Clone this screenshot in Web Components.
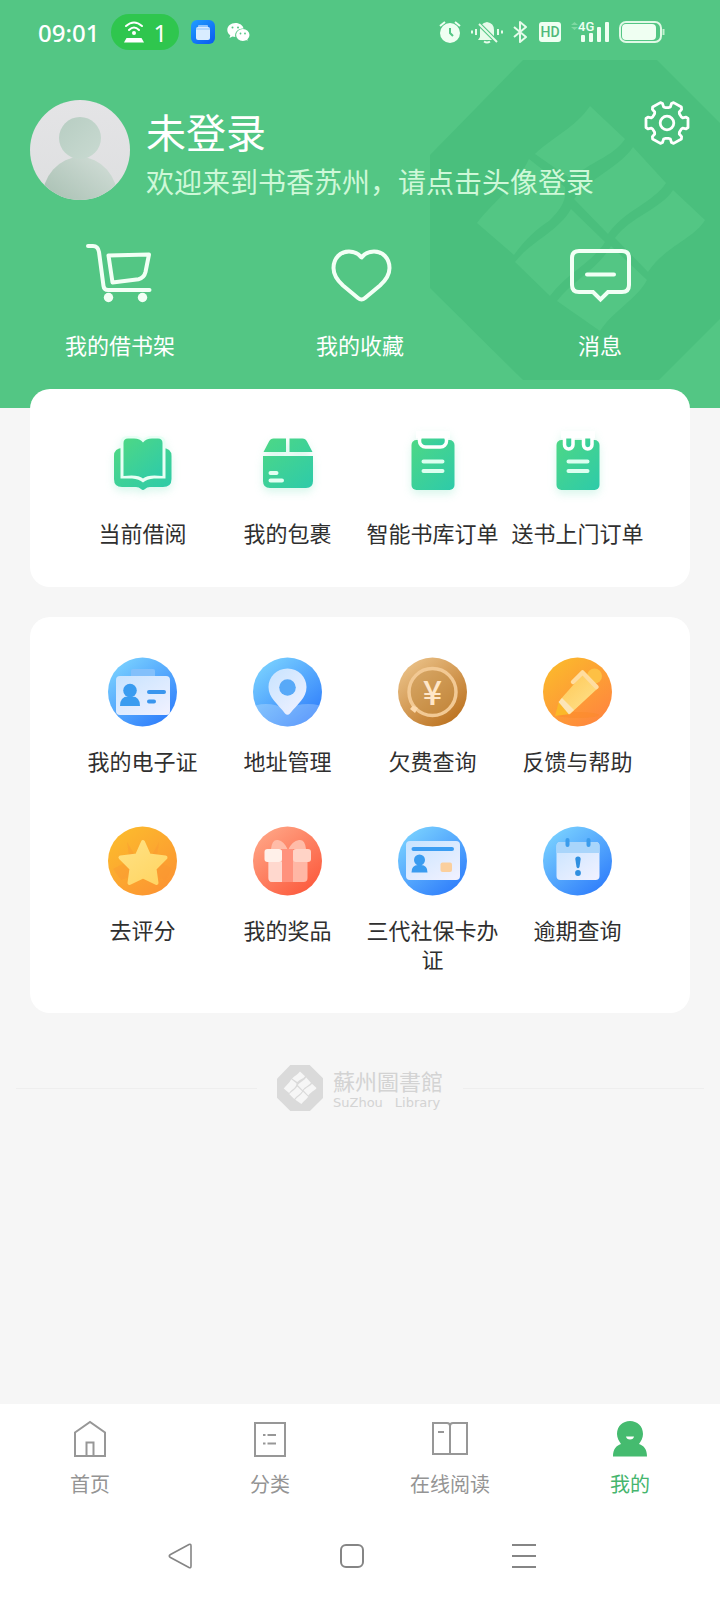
<!DOCTYPE html>
<html lang="zh-CN">
<head>
<meta charset="utf-8">
<meta name="viewport" content="width=device-width, initial-scale=1">
<title>书香苏州</title>
<style>
  body {
    margin: 0;
    background: #f6f6f6;
    color: #2f2f2f;
    font-family: "Noto Sans CJK SC", sans-serif;
    font-size: 22px;
  }
</style>
</head>
<body>
<mine-page></mine-page>

<script>
const gearPath = () => {
  const points = [];
  const add = (r, deg) => {
    const a = deg * Math.PI / 180;
    points.push(`${(23 + r * Math.cos(a)).toFixed(1)} ${(23 + r * Math.sin(a)).toFixed(1)}`);
  };
  for (let deg = 0; deg < 360; deg += 60) {
    add(20, deg - 17);
    add(21.5, deg - 12);
    add(21.5, deg + 12);
    add(20, deg + 17);
    add(16.5, deg + 18);
    add(15.5, deg + 23);
    add(15.5, deg + 37);
    add(16.5, deg + 42);
  }
  return `M${points.join('L')}Z`;
};

const gradient = (id, from, to) => `
  <defs><linearGradient id="${id}" x1="0.1" y1="0" x2="0.9" y2="1">
    <stop offset="0" stop-color="${from}"/><stop offset="1" stop-color="${to}"/>
  </linearGradient></defs>`;

const blueDisc = `${gradient('disc', '#7ed6ff', '#2a78fb')}${gradient('sheet', '#c9e4ff', '#f0f1ff')}
  <circle cx="34.500" cy="35" r="34.500" fill="url(#disc)"/>`;

const green = gradient('green', '#4cd787', '#2fcba8');

// name: [width, height, markup]
const icons = {
  hotspot: [20, 22, `<g fill="none" stroke="#fff" stroke-width="2" stroke-linecap="round"><path d="M2 5Q10-2 18 5M5 9Q10 4 15 9"/></g><circle cx="10" cy="12" r="2" fill="#fff"/><path d="M2.500 17H17.500L20 21.500H0Z" fill="#fff"/>`],
  folder: [24, 24, `${gradient('blue', '#1f9bff', '#0a5cf0')}<rect width="24" height="24" rx="6" fill="url(#blue)"/><rect x="7" y="5" width="10" height="3" rx="1" fill="#8fc6ff"/><rect x="5" y="7" width="14" height="13" rx="2" fill="#d9ecff"/><path d="M5 9H19" stroke="#8cc4ff"/>`],
  wechat: [23, 20, `<path d="M8.500 1C3.800 1 .3 4 .3 8c0 2.200 1.100 4 3 5.200L2.500 16l3-1.500 2.800.5C7.500 10 11 6.300 16.600 6.600 16 3.400 12.600 1 8.500 1Z" fill="#fff"/><ellipse cx="15.800" cy="13" rx="6.700" ry="5.900" fill="#fff"/><path d="M18 17l2.500 2-.5-3Z" fill="#fff"/><g fill="#53c684"><circle cx="5.500" cy="5.500" r="1"/><circle cx="11" cy="5.500" r="1"/><circle cx="13.500" cy="11.500" r=".9"/><circle cx="18" cy="11.500" r=".9"/></g>`],
  alarm: [22, 22, `<circle cx="11" cy="12" r="10" fill="#effff2"/><path d="M11 7V12L14 15" fill="none" stroke="#53c684" stroke-width="2"/><path d="M1 5L6 1M21 5L16 1" stroke="#effff2" stroke-width="2"/>`],
  muted: [32, 22, `<path d="M9 16V9q0-7 7-8 7 1 7 8v7l2 3H7Z" fill="#e6fbea"/><path d="M13 20.500q3 2 6 0" stroke="#e6fbea" stroke-width="2" fill="none"/><path d="M7 2L26 21" stroke="#53c684" stroke-width="4"/><path d="M8 3L26 21" stroke="#e6fbea" stroke-width="2"/><path d="M1 9.500v3M5 8v6M27 8v6M31 9.500v3" stroke="#e6fbea" stroke-width="2"/>`],
  bluetooth: [16, 22, `<path d="M1 6L13 16L7 21V1L13 6L1 16" fill="none" stroke="#e6fbea" stroke-width="2" stroke-linejoin="round"/>`],
  hd: [22, 20, `<rect width="22" height="20" rx="3" fill="#effff2"/><text x="11" y="15" text-anchor="middle" font-family="Roboto, sans-serif" font-size="14" font-weight="500" fill="#4fb97a">HD</text>`],
  signal: [38, 22, `<path d="M0 4L3.500 1L7 4ZM0 6L3.500 9L7 6Z" fill="#7fd8a2"/><text x="7" y="10" font-family="Roboto, sans-serif" font-size="13" font-weight="500" fill="#effff2">4G</text><g fill="#effff2"><rect x="10" y="14" width="4" height="7" rx="1"/><rect x="18" y="12" width="4" height="9" rx="1"/><rect x="26" y="6" width="4" height="15" rx="1"/><rect x="34" y="1" width="4" height="20" rx="1"/></g>`],
  battery: [46, 22, `<rect x="1" y="1" width="41" height="20" rx="6" fill="none" stroke="#e0f9e6" stroke-width="2"/><rect x="3" y="3" width="34" height="16" rx="4" fill="#effff2"/><path d="M44.500 8v6" stroke="#c2f0cf" stroke-width="2"/>`],

  avatar: [100, 100, `
    <defs>
      <clipPath id="round"><circle cx="50" cy="50" r="50"/></clipPath>
      <linearGradient id="back" x2="0" y2="1"><stop stop-color="#e4e4e6"/><stop offset="1" stop-color="#dedfe0"/></linearGradient>
      <linearGradient id="head" x1="0" x2="1" y2="1"><stop stop-color="#b7cdc2"/><stop offset="1" stop-color="#c9dad1"/></linearGradient>
      <linearGradient id="bust" x1=".7" x2=".3" y2=".6"><stop stop-color="#cddad3"/><stop offset="1" stop-color="#abc2b5"/></linearGradient>
    </defs>
    <g clip-path="url(#round)"><rect width="100" height="100" fill="url(#back)"/><ellipse cx="50" cy="100" rx="38" ry="43" fill="url(#bust)"/><circle cx="50" cy="38" r="21" fill="url(#head)"/></g>`],
  gear: [46, 46, `<path d="${gearPath()}" fill="none" stroke="#fff" stroke-width="2.800" stroke-linejoin="round"/><circle cx="23" cy="23" r="6.800" fill="none" stroke="#fff" stroke-width="2.800"/>`],

  cart: [72, 64, `<g transform="translate(4)" fill="none" stroke="#f2fff5" stroke-width="4" stroke-linecap="round" stroke-linejoin="round"><path d="M0 6H5Q10 6 11 12L15.500 46Q16 50 20 50H61.500"/><path d="M20.500 15.500L61 14.500L57.500 32Q56 38 50.500 39.300L24.500 42.500Z"/></g><circle cx="24.500" cy="57.500" r="4.700" fill="#f2fff5"/><circle cx="58.500" cy="57.500" r="4.700" fill="#f2fff5"/>`],
  heart: [72, 64, `<path d="M37.500 17.500C33.500 12 28.500 11.500 25 11.500C16.500 11.500 9.500 18 9.500 28C9.500 35 14 41 19 45.500L34 58Q37.500 61 41 58L56 45.500C61 41 65.500 35 65.500 28C65.500 18 58.500 11.500 50 11.500C46.500 11.500 41.500 12 37.500 17.500Z" fill="none" stroke="#f2fff5" stroke-width="4" stroke-linejoin="round"/>`],
  message: [72, 64, `<path d="M15 11H58Q65 11 65 18V45Q65 52 58 52H44L36.500 59.500L29 52H15Q8 52 8 45V18Q8 11 15 11Z" fill="none" stroke="#f2fff5" stroke-width="4"/><path d="M23 34.500H50" stroke="#f2fff5" stroke-width="4" stroke-linecap="round"/>`],

  book: [70, 70, `${green}<path d="M15 19Q6 19 6 27V50Q6 58 14 58H28Q31 58 33 60Q35 62 37 60Q39 58 42 58H55Q63.500 58 63.500 50V27Q63.500 19 54 19Z" fill="url(#green)"/><path d="M12.500 49.500V13Q12.500 7 20 7H27Q32 7 35 11Q38 7 43 7H50Q57.500 7 57.500 13V49.500H46Q39 50 35 53.500Q31 50 24 49.500Z" fill="#e8fff5"/><path d="M15.500 47V14Q15.500 9.500 20 9.500H26Q32 9.500 35 13.500Q38 9.500 44 9.500H50Q54.500 9.500 54.500 14V47Q40 45 35 49.500Q30 45 15.500 47Z" fill="url(#green)"/>`],
  parcel: [70, 70, `${green}<path d="M10.500 23L16 12.500Q17.500 9.500 20.500 9.500H33V23ZM36.500 9.500H49.500Q52.500 9.500 54 12.500L59.500 23H36.500ZM10 27H60V52Q60 59 53 59H17Q10 59 10 52Z" fill="url(#green)"/><path d="M17.500 44H23.500M17.500 51.500H29" stroke="#e2fff2" stroke-width="4" stroke-linecap="round"/>`],
  clipboard: [70, 70, `${green}<rect x="13.500" y="11" width="43" height="50" rx="5" fill="url(#green)"/><rect x="21.500" y="5" width="27" height="13" rx="6" fill="url(#green)" stroke="#fff" stroke-width="3.500"/><rect x="18" y="2" width="34" height="7.500" fill="#fff"/><path d="M25.500 32.500H44.500M25.500 42H44.500" stroke="#dcfff0" stroke-width="4" stroke-linecap="round"/>`],
  notepad: [70, 70, `${green}<rect x="13.500" y="11" width="43" height="50" rx="5" fill="url(#green)"/><g fill="url(#green)" stroke="#fff" stroke-width="3.500"><rect x="21.500" y="5" width="8.500" height="15" rx="4.200"/><rect x="40.500" y="5" width="8.500" height="15" rx="4.200"/></g><rect x="18" y="2" width="34" height="7.500" fill="#fff"/><path d="M25.500 32.500H44.500M25.500 42H44.500" stroke="#dcfff0" stroke-width="4" stroke-linecap="round"/>`],

  idcard: [70, 70, `${blueDisc}<rect x="23" y="12" width="24" height="9" rx="2" fill="#83c0fb"/><rect x="8" y="19" width="54" height="39" rx="4" fill="url(#sheet)"/><circle cx="22" cy="33.500" r="6.800" fill="#3a9cf0"/><path d="M12 49Q12 39.500 20 39.500H24Q32 39.500 32 49Z" fill="#3a9cf0"/><path d="M41 35H56M41 44.500H46" stroke="#3a96ee" stroke-width="4" stroke-linecap="round"/>`],
  pin: [70, 70, `${blueDisc}<clipPath id="disc-clip"><circle cx="34.500" cy="35" r="34.500"/></clipPath><g clip-path="url(#disc-clip)" fill="#fff" opacity=".24"><ellipse cx="13" cy="64" rx="26" ry="17"/><ellipse cx="55" cy="64" rx="29" ry="17"/></g><path d="M34.500 11.500C23.500 11.500 15.500 20 15.500 30C15.500 41 25 47 32 56.500Q34.500 59 37 56.500C44.500 47 53.500 41 53.500 30C53.500 20 45.500 11.500 34.500 11.500Z" fill="url(#sheet)"/><circle cx="34.500" cy="30.500" r="8.300" fill="#58a9f8"/>`],
  fee: [70, 70, `${gradient('gold', '#edc68e', '#b86c18')}<circle cx="34.500" cy="35" r="34.500" fill="url(#gold)"/><circle cx="34.500" cy="35" r="23.500" fill="#c5924c" fill-opacity=".45" stroke="#f2c994" stroke-width="3.500"/><text x="34.500" y="48" text-anchor="middle" font-family="Noto Sans CJK SC, sans-serif" font-size="34" font-weight="500" fill="#ffe6c8">¥</text><path d="M12 52L15 48.500L20 51L17 56Z" fill="#fcd9ac"/>`],
  pencil: [70, 70, `${gradient('amber', '#fbbc2b', '#ff823f')}${gradient('wood', '#ffc957', '#fee28e')}<circle cx="34.500" cy="35" r="34.500" fill="url(#amber)"/><ellipse cx="35" cy="58" rx="21" ry="3" fill="#fb8928" opacity=".5"/><circle cx="51.500" cy="19" r="7.500" fill="#fdc044"/><path d="M17 43L39 18L54 32L27 57Z" fill="url(#wood)"/><path d="M12 59L16 44L27 57Z" fill="#fbb829"/><path d="M15.500 45L19 41L31 53L26 57.500Z" fill="#fce5b7"/><path d="M30 25L39.500 15.500L53.500 30" fill="none" stroke="#ffdda0" stroke-width="4.500" stroke-linecap="round" stroke-linejoin="round"/>`],
  star: [70, 70, `${gradient('orange', '#fcbd2d', '#fc9132')}${gradient('shine', '#ffe182', '#ffd563')}<circle cx="34.500" cy="35" r="34.500" fill="url(#orange)"/><path d="M19 16L28 31L5 43L13 54L24 50ZM51 16L43 31L64 43L58 54L46 50Z" fill="#f99535" opacity=".35"/><path d="M35 16L41 29.500L57.500 31.500L46.500 42.500L48.500 57L35 50.500L21.500 57L23.500 42.500L12.500 31.500L29 29.500Z" fill="url(#shine)" stroke="url(#shine)" stroke-width="4" stroke-linejoin="round"/>`],
  gift: [70, 70, `${gradient('coral', '#ffa989', '#fc5538')}<circle cx="34.500" cy="35" r="34.500" fill="url(#coral)"/><path d="M18 23Q19 13 25 14Q31 15 35 24Q39 15 46 14Q52 13 53 23Z" fill="#ffbca8"/><rect x="15.500" y="24" width="39" height="32" rx="4" fill="#ffb7a5"/><path d="M15.500 36H29V56H19Q15.500 56 15.500 52Z" fill="#ffd8ce"/><path d="M29 23H40V56H29Z" fill="#ff927d"/><rect x="11.500" y="23" width="17.500" height="13" rx="3" fill="#fff0e9"/><rect x="40" y="23" width="18" height="13" rx="3" fill="#ffd3c6"/>`],
  social: [70, 70, `${blueDisc}<rect x="8" y="15" width="54" height="39" rx="4" fill="url(#sheet)"/><path d="M15.500 23H54" stroke="#3c9df2" stroke-width="4" stroke-linecap="round"/><circle cx="21.500" cy="34" r="5.500" fill="#3a9cf0"/><path d="M13.500 46.500Q13.500 39 20 39H23Q29.500 39 29.500 46.500Z" fill="#3a9cf0"/><rect x="42.500" y="36.500" width="11.500" height="9.500" rx="2" fill="#fbcf9d"/>`],
  overdue: [70, 70, `${blueDisc}<rect x="13.500" y="16" width="43" height="38" rx="4" fill="url(#sheet)"/><path d="M13.500 27V20Q13.500 16 17.500 16H52.500Q56.500 16 56.500 20V27Z" fill="#a9d5fb"/><path d="M24.500 14V19M45.500 14V19" stroke="#3b9cec" stroke-width="4" stroke-linecap="round"/><path d="M32.300 33Q32.300 30.500 35 30.500Q37.700 30.500 37.700 33L36.500 41Q35 43.500 33.500 41Z" fill="#2f8fe0"/><circle cx="35" cy="47" r="2.900" fill="#2f8fe0"/>`],

  home: [40, 40, `<path d="M5 13.500L20 3L35 13.500V37H5ZM16.500 37V23.500H23.500V37" fill="none" stroke="#979797" stroke-width="2"/>`],
  list: [40, 40, `<path d="M5 4H35V37H5Z" fill="none" stroke="#979797" stroke-width="2"/><path d="M13 16h2.500M17.500 16H26M13 24.500h2.500M17.500 24.500H26" stroke="#979797" stroke-width="2"/>`],
  reading: [40, 40, `<path d="M3 4H17Q20 4 20 7V35H3ZM37 4H23Q20 4 20 7V35H37ZM8 13H14" fill="none" stroke="#979797" stroke-width="2"/>`],
  me: [40, 40, `<path d="M20 2C27 2 33 7 33 15C33 19 31 22 29 25C34 27 37 30 37 37.500H3C3 30 6 27 11 25C9 22 7 19 7 15C7 7 13 2 20 2Z" fill="#45bb6f"/><path d="M16 17.500H24Q23.500 20.500 20 20.500Q16.500 20.500 16 17.500Z" fill="#fff"/>`],

  back: [24, 26, `<path d="M21 1.500Q23 .5 23 3V23Q23 25.500 21 24.500L2.500 14.500Q0 13 2.500 11.500Z" fill="none" stroke="#858585" stroke-width="1.600"/>`],
  desktop: [24, 26, `<rect x="1" y="2" width="22" height="22" rx="5" fill="none" stroke="#858585" stroke-width="2"/>`],
  recent: [24, 26, `<path d="M0 2H24M0 13H24M0 24H24" stroke="#858585" stroke-width="2"/>`],
};

class AppIcon extends HTMLElement {
  constructor() {
    super()
    this.attachShadow({ mode: 'open' })
  }

  connectedCallback() {
    const [width, height, markup] = icons[this.getAttribute('name')];
    this.shadowRoot.innerHTML = /*html*/`
      <style>
        :host { display: block; flex: none; }
        svg { display: block; overflow: visible; filter: var(--icon-glow, none); }
      </style>
      <svg width="${width}" height="${height}" viewBox="0 0 ${width} ${height}" aria-hidden="true">${markup}</svg>
    `
  }
}

// Octagon with six roof tiles. --plate and --tile set its two colours.
const templateEmblem = document.createElement('template');
templateEmblem.innerHTML = /*html*/`
  <style>
    :host { display: block; flex: none; }
    svg { display: block; width: 100%; height: 100%; }
  </style>
  <svg viewBox="430 60 320 320" aria-hidden="true">
    <path d="M430 155L523 60H657L750 153V289L659 380H523L430 288Z" fill="var(--plate)"/>
    <g fill="var(--tile)">
      <path d="M590 106L625 139C613 157 591 161 571 179L535 154C550 139 576 127 590 106Z"/>
      <path d="M633 147L666 183C654 202 625 210 608 234L574 199C590 178 621 166 633 147Z"/>
      <path d="M673 190L705 220C695 238 664 247 648 272L615 238C630 217 661 209 673 190Z"/>
      <path d="M529 159L565 187C567 201 560 210 549 221C537 229 526 238 514 255L477 223C490 205 517 185 529 159Z"/>
      <path d="M571 209L605 242C593 262 567 273 550 296L515 262C530 242 559 231 571 209Z"/>
      <path d="M611 246L647 280C637 299 614 310 600 331L557 301C570 283 599 268 611 246Z"/>
    </g>
  </svg>
`

class LibraryEmblem extends HTMLElement {
  constructor() {
    super()
    this.attachShadow({ mode: 'open' })
    this.shadowRoot.appendChild(templateEmblem.content.cloneNode(true))
  }
}

const templateStatusBar = document.createElement('template');
templateStatusBar.innerHTML = /*html*/`
  <style>
    :host {
      display: flex;
      justify-content: space-between;
      align-items: center;
      height: 64px;
      padding: 0 55px 0 38px;
      color: white;
      font-family: "Noto Sans", sans-serif;
      font-size: 24px;
    }
    div {
      display: flex;
      align-items: center;
      gap: 12px;
    }
    time {
      font-weight: 500;
    }
    .end {
      gap: 10px;
    }
    .pill {
      display: flex;
      align-items: center;
      justify-content: center;
      gap: 10px;
      width: 68px;
      height: 36px;
      border-radius: 18px;
      background-color: #2fc64e;
    }
  </style>
  <div>
    <time>09:01</time>
    <span class="pill"><app-icon name="hotspot"></app-icon><span>1</span></span>
    <app-icon name="folder"></app-icon>
    <app-icon name="wechat"></app-icon>
  </div>
  <div class="end">
    <app-icon name="alarm"></app-icon>
    <app-icon name="muted"></app-icon>
    <app-icon name="bluetooth"></app-icon>
    <app-icon name="hd"></app-icon>
    <app-icon name="signal"></app-icon>
    <app-icon name="battery"></app-icon>
  </div>
`

class StatusBar extends HTMLElement {
  constructor() {
    super()
    this.attachShadow({ mode: 'open' })
    this.shadowRoot.appendChild(templateStatusBar.content.cloneNode(true))
  }
}

const templateProfileHeader = document.createElement('template');
templateProfileHeader.innerHTML = /*html*/`
  <style>
    :host {
      display: block;
      position: relative;
      overflow: hidden;
      padding-bottom: 49px;
      background-color: #53c684;
      color: white;
    }
    library-emblem {
      --plate: #4abf7d;
      --tile: #53c684;
      position: absolute;
      top: 60px;
      right: -30px;
      width: 320px;
      height: 320px;
    }
    status-bar, section, nav {
      position: relative;
    }
    section {
      display: flex;
      gap: 16px;
      padding: 36px 30px 0;
    }
    button {
      flex: none;
      align-self: flex-start;
      padding: 0;
      border: 0;
      background: none;
      cursor: pointer;
    }
    .who {
      flex: 1;
      display: flex;
      flex-direction: column;
      justify-content: flex-end;
      gap: 7px;
    }
    h1, p {
      margin: 0;
      font-weight: 400;
    }
    h1 {
      font-size: 40px;
      line-height: 48px;
    }
    p {
      color: #cef8d8;
      font-size: 28px;
      line-height: 38px;
    }
    nav {
      display: grid;
      grid-template-columns: repeat(3, 1fr);
      margin-top: 40px;
    }
  </style>
  <library-emblem></library-emblem>
  <status-bar></status-bar>
  <section>
    <button aria-label="登录"><app-icon name="avatar"></app-icon></button>
    <div class="who">
      <h1><slot name="name"></slot></h1>
      <p><slot name="hint"></slot></p>
    </div>
    <button aria-label="设置"><app-icon name="gear"></app-icon></button>
  </section>
  <nav><slot></slot></nav>
`

class ProfileHeader extends HTMLElement {
  constructor() {
    super()
    this.attachShadow({ mode: 'open' })
    this.shadowRoot.appendChild(templateProfileHeader.content.cloneNode(true))
  }
}

// Icon over a label, used in the header, in the cards and in the tab bar.
const templateMenuLink = document.createElement('template');
templateMenuLink.innerHTML = /*html*/`
  <style>
    :host { display: block; }
    a {
      display: flex;
      flex-direction: column;
      align-items: center;
      gap: var(--link-gap, 19px);
      color: inherit;
      line-height: var(--link-line, 29px);
      text-align: center;
      text-decoration: none;
    }
  </style>
  <a href="#"><app-icon></app-icon><span><slot></slot></span></a>
`

class MenuLink extends HTMLElement {
  constructor() {
    super()
    this.attachShadow({ mode: 'open' })
    const content = templateMenuLink.content.cloneNode(true);
    content.querySelector('app-icon').setAttribute('name', this.getAttribute('icon'));
    this.shadowRoot.appendChild(content)
  }
}

const templateMenuCard = document.createElement('template');
templateMenuCard.innerHTML = /*html*/`
  <style>
    :host {
      display: grid;
      grid-template-columns: repeat(4, 1fr);
      row-gap: 51px;
      padding: 40px;
      border-radius: 20px;
      background-color: white;
    }
  </style>
  <slot></slot>
`

class MenuCard extends HTMLElement {
  constructor() {
    super()
    this.attachShadow({ mode: 'open' })
    this.shadowRoot.appendChild(templateMenuCard.content.cloneNode(true))
  }
}

const templateBrandFooter = document.createElement('template');
templateBrandFooter.innerHTML = /*html*/`
  <style>
    :host {
      display: flex;
      align-items: center;
      gap: 20px;
      padding: 52px 16px;
      color: #d3d3d3;
    }
    hr {
      flex: 1;
      margin: 0;
      border: 0;
      border-top: 1px solid #eeeeee;
    }
    .brand {
      display: flex;
      align-items: center;
      gap: 10px;
    }
    library-emblem {
      --plate: #dadada;
      --tile: #f6f6f6;
      width: 46px;
      height: 46px;
    }
    .zh {
      font-family: "Noto Sans CJK TC", sans-serif;
      font-size: 22px;
      line-height: 28px;
    }
    .en {
      display: flex;
      gap: 12px;
      font-family: "DejaVu Sans", sans-serif;
      font-size: 13px;
      line-height: 17px;
    }
  </style>
  <hr>
  <div class="brand">
    <library-emblem></library-emblem>
    <div>
      <div class="zh">蘇州圖書館</div>
      <div class="en"><span>SuZhou</span><span>Library</span></div>
    </div>
  </div>
  <hr>
`

class BrandFooter extends HTMLElement {
  constructor() {
    super()
    this.attachShadow({ mode: 'open' })
    this.shadowRoot.appendChild(templateBrandFooter.content.cloneNode(true))
  }
}

const templateTabBar = document.createElement('template');
templateTabBar.innerHTML = /*html*/`
  <style>
    :host {
      --link-gap: 10px;
      --link-line: 30px;
      display: grid;
      grid-template-columns: repeat(4, 1fr);
      padding: 15px 0 13px;
      background-color: white;
      color: #949494;
      font-size: 20px;
    }
    ::slotted([current]) {
      color: #45b56d;
    }
  </style>
  <slot></slot>
`

class TabBar extends HTMLElement {
  constructor() {
    super()
    this.attachShadow({ mode: 'open' })
    this.shadowRoot.appendChild(templateTabBar.content.cloneNode(true))
  }
}

const templateSystemKeys = document.createElement('template');
templateSystemKeys.innerHTML = /*html*/`
  <style>
    :host {
      display: flex;
      justify-content: center;
      align-items: center;
      gap: 148px;
      height: 88px;
      padding-right: 16px;
      background-color: white;
    }
    button {
      padding: 0;
      border: 0;
      background: none;
      cursor: pointer;
    }
  </style>
  <button aria-label="返回"><app-icon name="back"></app-icon></button>
  <button aria-label="主屏幕"><app-icon name="desktop"></app-icon></button>
  <button aria-label="最近任务"><app-icon name="recent"></app-icon></button>
`

class SystemKeys extends HTMLElement {
  constructor() {
    super()
    this.attachShadow({ mode: 'open' })
    this.shadowRoot.appendChild(templateSystemKeys.content.cloneNode(true))
  }
}

const templateMinePage = document.createElement('template');
templateMinePage.innerHTML = /*html*/`
  <style>
    :host {
      display: flex;
      flex-direction: column;
      min-height: 100vh;
    }
    profile-header {
      --link-gap: 25px;
      --link-line: 30px;
    }
    main {
      position: relative;
      flex: 1;
      margin-top: -19px;
    }
    .cards {
      display: grid;
      gap: 30px;
      padding: 0 30px;
    }
    .borrow {
      --icon-glow: drop-shadow(0 4px 4px rgba(60, 215, 160, 0.2));
    }
  </style>
  <profile-header>
    <span slot="name">未登录</span>
    <span slot="hint">欢迎来到书香苏州，请点击头像登录</span>
    <menu-link icon="cart">我的借书架</menu-link>
    <menu-link icon="heart">我的收藏</menu-link>
    <menu-link icon="message">消息</menu-link>
  </profile-header>
  <main>
    <div class="cards">
      <menu-card class="borrow">
        <menu-link icon="book">当前借阅</menu-link>
        <menu-link icon="parcel">我的包裹</menu-link>
        <menu-link icon="clipboard">智能书库订单</menu-link>
        <menu-link icon="notepad">送书上门订单</menu-link>
      </menu-card>
      <menu-card>
        <menu-link icon="idcard">我的电子证</menu-link>
        <menu-link icon="pin">地址管理</menu-link>
        <menu-link icon="fee">欠费查询</menu-link>
        <menu-link icon="pencil">反馈与帮助</menu-link>
        <menu-link icon="star">去评分</menu-link>
        <menu-link icon="gift">我的奖品</menu-link>
        <menu-link icon="social">三代社保卡办证</menu-link>
        <menu-link icon="overdue">逾期查询</menu-link>
      </menu-card>
    </div>
    <brand-footer></brand-footer>
  </main>
  <tab-bar>
    <menu-link icon="home">首页</menu-link>
    <menu-link icon="list">分类</menu-link>
    <menu-link icon="reading">在线阅读</menu-link>
    <menu-link icon="me" current>我的</menu-link>
  </tab-bar>
  <system-keys></system-keys>
`

class MinePage extends HTMLElement {
  constructor() {
    super()
    this.attachShadow({ mode: 'open' })
    this.shadowRoot.appendChild(templateMinePage.content.cloneNode(true))
  }
}

window.customElements.define('app-icon', AppIcon);
window.customElements.define('library-emblem', LibraryEmblem);
window.customElements.define('status-bar', StatusBar);
window.customElements.define('menu-link', MenuLink);
window.customElements.define('menu-card', MenuCard);
window.customElements.define('profile-header', ProfileHeader);
window.customElements.define('brand-footer', BrandFooter);
window.customElements.define('tab-bar', TabBar);
window.customElements.define('system-keys', SystemKeys);
window.customElements.define('mine-page', MinePage);
</script>
</body>
</html>
